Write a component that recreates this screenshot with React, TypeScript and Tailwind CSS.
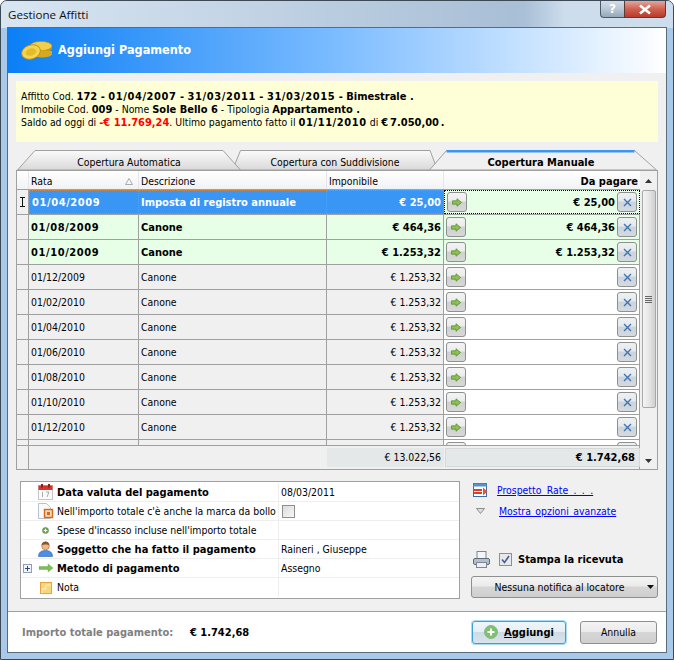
import React from "react";

const reg = "font-['DejaVu_Sans_Condensed','Liberation_Sans',sans-serif] text-[10.4px] leading-[13px]";
const bold = "font-['DejaVu_Sans_Condensed','Liberation_Sans',sans-serif] font-bold text-[11px] leading-[13px]";
const dateB = "tracking-[0.6px]";

function Coins() {
  return (
    <svg width="32" height="20" viewBox="0 0 32 20">
      <ellipse cx="20" cy="7" rx="11" ry="5" fill="#c79b12" />
      <ellipse cx="20" cy="5" rx="11" ry="4.6" fill="#f2cf4a" stroke="#b88c10" strokeWidth="0.6" />
      <path d="M12 13h19v-3H12z" fill="#d9ad20" />
      <ellipse cx="21" cy="13" rx="10" ry="3.6" fill="#d6aa1e" />
      <ellipse cx="10" cy="11" rx="9.6" ry="7" fill="#f5d44f" stroke="#b88c10" strokeWidth="0.8" transform="rotate(-18 10 11)" />
      <ellipse cx="10" cy="11" rx="5.5" ry="3.6" fill="#e4bb2c" transform="rotate(-18 10 11)" />
    </svg>
  );
}

function GreenBtn() {
  return (
    <div className="w-5 h-5 rounded-[3px] border border-[#8e8f8f] bg-[linear-gradient(#f3f3f3,#ebebeb_45%,#d0d0d0_50%,#d8d8d8)] flex items-center justify-center shrink-0">
      <svg width="10" height="9" viewBox="0 0 12 10">
        <path d="M0.5 3h5.5V0.5L11.5 5 6 9.5V7H0.5z" fill="#8cc152" stroke="#4f8a2b" strokeWidth="0.9" />
      </svg>
    </div>
  );
}

function XBtn() {
  return (
    <div className="w-5 h-5 rounded-[3px] border border-[#8e8f8f] bg-[linear-gradient(#eef1f4,#e6e9ec_45%,#cdd3da_50%,#d5dae0)] flex items-center justify-center shrink-0">
      <svg width="9" height="9" viewBox="0 0 9 9">
        <path d="M1 1l7 7M8 1L1 8" stroke="#3f76b0" strokeWidth="1.4" />
      </svg>
    </div>
  );
}

type Row = { d: string; desc: string; imp: string; pay: string; kind: "sel" | "paid" | "open" };
const rows: Row[] = [
  { d: "01/04/2009", desc: "Imposta di registro annuale", imp: "€ 25,00", pay: "€ 25,00", kind: "sel" },
  { d: "01/08/2009", desc: "Canone", imp: "€ 464,36", pay: "€ 464,36", kind: "paid" },
  { d: "01/10/2009", desc: "Canone", imp: "€ 1.253,32", pay: "€ 1.253,32", kind: "paid" },
  { d: "01/12/2009", desc: "Canone", imp: "€ 1.253,32", pay: "", kind: "open" },
  { d: "01/02/2010", desc: "Canone", imp: "€ 1.253,32", pay: "", kind: "open" },
  { d: "01/04/2010", desc: "Canone", imp: "€ 1.253,32", pay: "", kind: "open" },
  { d: "01/06/2010", desc: "Canone", imp: "€ 1.253,32", pay: "", kind: "open" },
  { d: "01/08/2010", desc: "Canone", imp: "€ 1.253,32", pay: "", kind: "open" },
  { d: "01/10/2010", desc: "Canone", imp: "€ 1.253,32", pay: "", kind: "open" },
  { d: "01/12/2010", desc: "Canone", imp: "€ 1.253,32", pay: "", kind: "open" },
  { d: "", desc: "", imp: "", pay: "", kind: "open" },
];

function GridRow({ r }: { r: Row }) {
  const sel = r.kind === "sel";
  const txt = r.kind === "open" ? reg : bold;
  const bg = sel ? "bg-[#3a96f5] text-white" : r.kind === "paid" ? "bg-[#e6ffe6] text-black" : "bg-[#f0f0f0] text-black";
  const payBg = r.kind === "open" ? "bg-white" : "bg-[#e6ffe6]";
  return (
    <div className="grid grid-cols-[12px_110px_188px_117px_196px] h-[25px] shrink-0 border-b border-[#a0a0a0] text-black">
      <div className="bg-[#f0f0f0] border-r border-[#a0a0a0] flex items-center justify-center">
        {sel && (
          <svg width="7" height="10" viewBox="0 0 7 10">
            <path d="M1 0.5h5M1 9.5h5M3.5 0.5v9" stroke="#111" strokeWidth="1" />
          </svg>
        )}
      </div>
      <div className={`${bg} ${txt} ${r.kind === "open" ? "" : dateB} border-r border-[#a0a0a0] pl-[2px] flex items-center ${sel ? "border-t border-b border-l border-dotted border-[#c98a50]" : ""}`}>{r.d}</div>
      <div className={`${bg} ${txt} border-r border-[#a0a0a0] pl-[2px] flex items-center ${sel ? "border-t border-b border-dotted border-[#c98a50]" : ""}`}>{r.desc}</div>
      <div className={`${bg} ${txt} border-r border-[#a0a0a0] pr-[2px] flex items-center justify-end ${sel ? "border-t border-b border-dotted border-[#c98a50]" : ""}`}>{r.imp}</div>
      <div className={`${payBg} ${txt} border-r border-[#a0a0a0] pl-[2px] pr-[2px] flex items-center gap-[2px] ${sel ? "border border-dotted border-black" : ""}`}>
        <GreenBtn />
        <div className="flex-1 text-right">{r.pay}</div>
        <XBtn />
      </div>
    </div>
  );
}

function Tab({ label, w, active, z, ml, points, vb }: { label: string; w: string; active?: boolean; z: string; ml: string; points: string; vb: string }) {
  return (
    <div className={`relative h-5 flex items-end justify-center pb-[1px] ${w} ${z} ${ml} ${active ? "pr-1" : ""}`}>
      <svg className="absolute inset-0 w-full h-full" viewBox={vb} preserveAspectRatio="none">
        <defs>
          <linearGradient id="tabg" x1="0" y1="0" x2="0" y2="1">
            <stop offset="0" stopColor="#fbfbfb" />
            <stop offset="1" stopColor="#d9d9d9" />
          </linearGradient>
        </defs>
        <polygon points={points} fill={active ? "#f0f0f0" : "url(#tabg)"} stroke="#a0a0a0" strokeWidth="1" />
        {active && <path d="M17.5 1h188" stroke="#3a96f5" strokeWidth="3" />}
      </svg>
      <span className={`relative ${active ? bold : reg} text-black`}>{label}</span>
    </div>
  );
}

function Scrollbar() {
  return (
    <div className="w-[17px] bg-[#f0f0f0] flex flex-col items-center">
      <div className="h-[19px] flex items-center justify-center shrink-0">
        <svg width="7" height="4" viewBox="0 0 7 4"><path d="M0 4L3.5 0 7 4z" fill="#333" /></svg>
      </div>
      <div className="w-[14px] h-[218px] shrink-0 rounded-[2px] border border-[#a8a8a8] bg-[linear-gradient(90deg,#f5f5f5,#e4e4e4_55%,#cfcfcf)] flex flex-col items-center justify-center gap-[1px]">
        <div className="w-[7px] h-px bg-[#666]" />
        <div className="w-[7px] h-px bg-[#666]" />
        <div className="w-[7px] h-px bg-[#666]" />
        <div className="w-[7px] h-px bg-[#666]" />
      </div>
      <div className="flex-1 flex items-end pb-[6px]">
        <svg width="7" height="4" viewBox="0 0 7 4"><path d="M0 0L3.5 4 7 0z" fill="#333" /></svg>
      </div>
    </div>
  );
}

function Calendar() {
  return (
    <svg width="15" height="16" viewBox="0 0 15 16">
      <rect x="0.5" y="1.5" width="14" height="14" fill="#fbfbfb" stroke="#c5c5c5" />
      <rect x="0.5" y="1.5" width="14" height="4.5" fill="#d9322b" />
      <rect x="3" y="0" width="2" height="3.5" fill="#8f1f1a" />
      <rect x="10" y="0" width="2" height="3.5" fill="#8f1f1a" />
      <path d="M4.5 8v5M8 8h3l-2 5" stroke="#aaa" fill="none" />
    </svg>
  );
}
function DocIcon() {
  return (
    <svg width="17" height="16" viewBox="0 0 17 16">
      <path d="M1.5 0.5h8l4 4v11h-12z" fill="#fafafa" stroke="#b9c2cc" />
      <rect x="7.5" y="6.5" width="8" height="8" fill="#f7d7b2" stroke="#d2691e" strokeWidth="1.4" />
      <rect x="10" y="9" width="3" height="3" fill="#d2691e" />
    </svg>
  );
}
function GreenDot({ s = 7 }: { s?: number }) {
  return (
    <svg width={s} height={s} viewBox="0 0 8 8">
      <circle cx="4" cy="4" r="3.5" fill="#6fa84c" stroke="#557d3a" strokeWidth="0.6" />
      <path d="M4 2v4M2 4h4" stroke="#fff" strokeWidth="1.2" />
    </svg>
  );
}
function Person() {
  return (
    <svg width="15" height="16" viewBox="0 0 15 16">
      <path d="M0.5 15.5c0-4 2.5-6 7-6s7 2 7 6z" fill="#4d8fe0" stroke="#2c60a8" strokeWidth="0.6" />
      <circle cx="7.5" cy="5" r="3.8" fill="#f0b887" stroke="#a8673a" strokeWidth="0.6" />
      <path d="M3.6 4.6c0-3 2-4.2 3.9-4.2s3.9 1.2 3.9 4.2c-1.6-1.4-5.6-1.4-7.8 0z" fill="#8a5328" />
    </svg>
  );
}
function GreenArrow() {
  return (
    <svg width="14" height="8" viewBox="0 0 14 8">
      <path d="M0 2.6h9V0l5 4-5 4V5.4H0z" fill="#7fbf5a" stroke="#5c9a3d" strokeWidth="0.4" />
    </svg>
  );
}
function NoteIcon() {
  return (
    <svg width="12" height="12" viewBox="0 0 12 12">
      <rect x="0.5" y="0.5" width="11" height="11" fill="#fbd57a" stroke="#e8a33a" />
      <path d="M2 11V7h4V3h5" fill="none" stroke="#fff2c8" />
    </svg>
  );
}
function PropRow({ icon, expander, label, value, strong, last }: { icon: React.ReactNode; expander?: boolean; label: string; value?: React.ReactNode; strong?: boolean; last?: boolean }) {
  return (
    <div className={`grid grid-cols-[258px_1fr] h-[19px] ${last ? "" : "border-b"} border-[#eeeeee]`}>
      <div className="flex items-center border-r border-[#eeeeee] pl-[2px]">
        <div className="w-[12px] shrink-0 flex items-center">
          {expander && (
            <div className="w-[9px] h-[9px] border border-[#8f9eb0] bg-[#f2f4f7] flex items-center justify-center">
              <svg width="5" height="5" viewBox="0 0 5 5"><path d="M0 2.5h5M2.5 0v5" stroke="#2b4a80" /></svg>
            </div>
          )}
        </div>
        <div className="w-[21px] shrink-0 flex items-center justify-center">{icon}</div>
        <div className={`${strong ? bold : reg} ml-[1px] whitespace-nowrap text-black`}>{label}</div>
      </div>
      <div className={`${reg} pl-[2px] flex items-center text-black`}>{value}</div>
    </div>
  );
}

export default function App() {
  return (
    <div className="w-[674px] h-[660px] flex flex-col bg-[#a9c9ea] border border-[#3d4a55] rounded-t-[7px] overflow-hidden">
      <div className="h-[27px] shrink-0 -mb-px flex justify-between bg-[linear-gradient(90deg,#d9e6f2_0%,#a9bfd6_76%,#aac0d7_78%,#cdddec_84%,#cddded_100%)] pl-[7px] pr-[7px]">
        <div className="font-['Open_Sans',sans-serif] text-[11.6px] leading-[27px] text-[#111]">Gestione Affitti</div>
        <div className="flex h-[17px]">
          <div className="w-[24px] h-full bg-[linear-gradient(#d3dde7,#b9c8d6_50%,#94a8b9)] border-b border-l border-[#4d5a66] rounded-bl-[4px] flex items-center justify-center text-[12px] font-bold text-white font-['DejaVu_Sans',sans-serif]">?</div>
          <div className="w-[42px] h-full bg-[linear-gradient(#e2a79f,#d0614f_50%,#b93a2a)] border border-t-0 border-[#5c3a36] rounded-br-[4px] flex items-center justify-center">
            <svg width="14" height="11" viewBox="0 0 14 11"><path d="M2 1.5l10 8M12 1.5l-10 8" stroke="#fff" strokeWidth="2.6" /></svg>
          </div>
        </div>
      </div>
      <div className="flex-1 mx-[6px] mb-[6px] border border-[#5a6b7a] bg-[#f0f0f0] flex flex-col min-h-0">
        <div className="h-[45px] shrink-0 bg-[linear-gradient(90deg,#0b7ff6,#7cbcff_50%,#ffffff)] flex items-center pl-[13px] gap-[5px]">
          <Coins />
          <div className="font-['DejaVu_Sans_Condensed',sans-serif] font-bold text-[12.6px] text-white">Aggiungi Pagamento</div>
        </div>
        <div className="flex-1 px-2 pt-2 flex flex-col min-h-0">
          <div className={`${reg} h-[61px] shrink-0 bg-[#ffffd7] pl-[5px] pt-[9px] text-black`}>
            <div>Affitto Cod. <b className={bold}>172 - <span className={dateB}>01/04/2007</span> - <span className={dateB}>31/03/2011</span> - <span className={dateB}>31/03/2015</span> - Bimestrale .</b></div>
            <div>Immobile Cod. <b className={bold}>009</b> - Nome <b className={bold}>Sole Bello 6</b> - Tipologia <b className={bold}>Appartamento .</b></div>
            <div>Saldo ad oggi di <b className={`${bold} text-[#ff0000]`}>-€ 11.769,24</b>. Ultimo pagamento fatto il <b className={`${bold} ${dateB}`}>01/11/2010</b> di <b className={`${bold} [word-spacing:-1.5px]`}>€ 7.050,00 .</b></div>
          </div>
          <div className="mt-2 flex shrink-0 pl-px">
            <Tab label="Copertura Automatica" w="w-[224px]" z="z-10" ml="" vb="0 0 224 20" points="0.5,20 18,0.5 206,0.5 223.5,20" />
            <Tab label="Copertura con Suddivisione" w="w-[206px]" z="z-0" ml="-ml-[9px]" vb="0 0 206 20" points="0.5,20 8.5,0.5 198,0.5 205.5,20" />
            <Tab label="Copertura Manuale" w="w-[228px]" active z="z-10" ml="-ml-[9px]" vb="0 0 228 20" points="0.5,20 17.5,0.5 205.5,0.5 227.5,20" />
          </div>
          <div className="w-[642px] h-[300px] shrink-0 border border-[#a0a0a0] flex bg-white relative z-20">
            <div className="w-[623px] flex flex-col">
              <div className={`${reg} grid grid-cols-[12px_110px_188px_117px_196px] h-[19px] shrink-0 border-b border-[#a0a0a0] bg-[linear-gradient(#ffffff,#f1f2f4)] text-black`}>
                <div className="border-r border-[#e6e6e6]" />
                <div className="border-r border-[#e6e6e6] pl-[2px] pt-[2px] flex items-center justify-between pr-[5px]">
                  <span>Rata</span>
                  <svg width="8" height="7" viewBox="0 0 8 7"><path d="M0.5 6.5L4 0.5l3.5 6z" fill="none" stroke="#a9a9a9" /></svg>
                </div>
                <div className="border-r border-[#e6e6e6] pl-[2px] pt-[2px] flex items-center">Descrizione</div>
                <div className="border-r border-[#e6e6e6] pl-[2px] pt-[2px] flex items-center">Imponibile</div>
                <div className={`${bold} flex items-center justify-end pr-[2px] pt-[2px]`}>Da pagare</div>
              </div>
              <div className="h-[255px] shrink-0 overflow-hidden flex flex-col">
                {rows.map((r, i) => <GridRow key={i} r={r} />)}
              </div>
              <div className="h-[24px] shrink-0 border-t border-[#a0a0a0] grid grid-cols-[12px_110px_188px_117px_196px] bg-[#f0f0f0] border-r">
                <div className="border-r border-[#a0a0a0]" />
                <div />
                <div />
                <div className={`${reg} bg-[#e4e8e8] my-[2px] flex items-center justify-end pr-[3px] text-black`}>€ 13.022,56</div>
                <div className={`${bold} bg-[#e4e8e8] my-[2px] ml-px flex items-center justify-end pr-[4px] border border-[#d6d9d9] text-black`}>€ 1.742,68</div>
              </div>
            </div>
            <Scrollbar />
          </div>
          <div className="mt-[11px] flex shrink-0 pl-1">
            <div className="w-[440px] h-[118px] border border-[#a0a0a0] bg-white flex flex-col pt-px">
              <PropRow icon={<Calendar />} label="Data valuta del pagamento" strong value="08/03/2011" />
              <PropRow icon={<DocIcon />} label="Nell'importo totale c'è anche la marca da bollo" value={<div className="ml-px w-[13px] h-[13px] border border-[#8e8f8f] bg-[linear-gradient(135deg,#dcdcdc,#f7f7f7)]" />} />
              <PropRow icon={<GreenDot />} label="Spese d'incasso incluse nell'importo totale" />
              <PropRow icon={<Person />} label="Soggetto che ha fatto il pagamento" strong value="Raineri , Giuseppe" />
              <PropRow icon={<GreenArrow />} expander label="Metodo di pagamento" strong value="Assegno" />
              <PropRow icon={<NoteIcon />} label="Nota" last />
            </div>
            <div className="ml-[11px] w-[187px] flex flex-col">
              <div className="flex items-center h-[18px] pl-[2px] gap-[9px]">
                <svg width="15" height="15" viewBox="0 0 15 15">
                  <rect x="0.5" y="0.5" width="13" height="13" fill="#fff" stroke="#3a6ea8" />
                  <rect x="0.5" y="0.5" width="13" height="3" fill="#5a8fc8" />
                  <path d="M1 7h8M1 10h8" stroke="#d8402c" strokeWidth="2" />
                  <path d="M10 4.5l4.5 4-4.5 4z" fill="#e8552c" />
                </svg>
                <span className={`${reg} text-[#0000ff] underline [word-spacing:2.4px]`}>Prospetto Rate . . .</span>
              </div>
              <div className="flex items-center h-[18px] mt-[3px] pl-[5px] gap-[14px]">
                <svg width="9" height="6" viewBox="0 0 9 6"><path d="M0.5 0.5h8L4.5 5.5z" fill="#dfdfdf" stroke="#777" strokeWidth="0.8" /></svg>
                <span className={`${reg} text-[#0000ff] underline [word-spacing:1.5px]`}>Mostra opzioni avanzate</span>
              </div>
              <div className="flex-1" />
              <div className="flex items-center pl-[2px] mb-[8px]">
                <svg width="17" height="17" viewBox="0 0 17 17">
                  <rect x="4" y="0.5" width="9" height="7" fill="#f4f6f9" stroke="#7b8794" />
                  <rect x="0.5" y="7.5" width="16" height="6" rx="1.5" fill="#b4bfcb" stroke="#5f6b78" />
                  <rect x="3.5" y="11.5" width="10" height="5" fill="#eceff3" stroke="#7b8794" />
                </svg>
                <div className="ml-[9px] w-[13px] h-[13px] border border-[#8e8f8f] bg-[#e8e8e8] flex items-center justify-center">
                  <svg width="9" height="9" viewBox="0 0 9 9"><path d="M1 4.5l2.5 3L8 1" fill="none" stroke="#3f5f9a" strokeWidth="1.6" /></svg>
                </div>
                <span className={`${bold} ml-[6px] text-black`}>Stampa la ricevuta</span>
              </div>
              <div className={`${reg} h-[22px] w-[187px] mb-px rounded-[3px] border border-[#8e8f8f] bg-[linear-gradient(#f3f3f3,#ebebeb_45%,#d6d6d6_50%,#cfcfcf)] flex items-center justify-center relative text-black pr-[10px]`}>
                Nessuna notifica al locatore
                <svg className="absolute right-[3px] top-[8px]" width="7" height="4" viewBox="0 0 7 4"><path d="M0 0h7L3.5 4z" fill="#111" /></svg>
              </div>
            </div>
          </div>
        </div>
        <div className="h-[41px] shrink-0 border-t border-[#a0a0a0] bg-white flex items-center pl-[14px] pr-[9px]">
          <span className={`${bold} text-[#808080] w-[168px] whitespace-nowrap`}>Importo totale pagamento:</span>
          <span className={`${bold} text-black`}>€ 1.742,68</span>
          <div className="flex-1" />
          <div className="w-[94px] h-[23px] rounded-[3px] border border-[#3c9fd6] bg-[linear-gradient(#eef6fb,#e6eff5_45%,#cfdbe4_50%,#d8e3ea)] flex items-center justify-center gap-[6px] shadow-[0_0_0_1px_#a8dcf5]">
            <svg width="14" height="14" viewBox="0 0 14 14">
              <circle cx="7" cy="7" r="6.5" fill="#7cc26e" stroke="#8fb58a" />
              <path d="M7 3.5v7M3.5 7h7" stroke="#fff" strokeWidth="2" />
            </svg>
            <span className={`${bold} text-black`}><span className="underline">A</span>ggiungi</span>
          </div>
          <div className={`${reg} ml-[14px] w-[77px] h-[23px] rounded-[3px] border border-[#8e8f8f] bg-[linear-gradient(#f3f3f3,#ebebeb_45%,#d6d6d6_50%,#cfcfcf)] flex items-center justify-center text-black`}>Annulla</div>
        </div>
      </div>
    </div>
  );
}
